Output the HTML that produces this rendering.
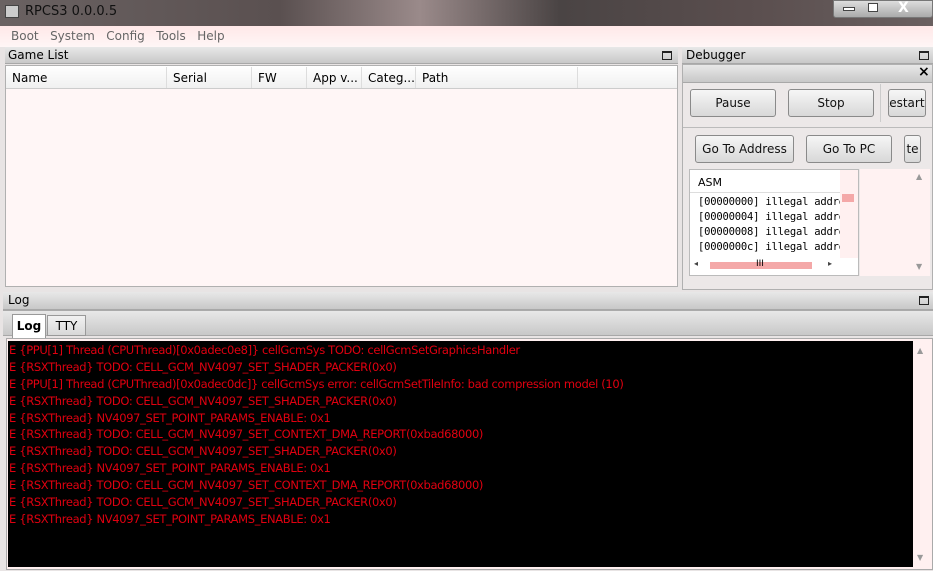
<html><head><style>
*{margin:0;padding:0;box-sizing:border-box}
body{width:933px;height:571px;overflow:hidden;background:#e8e4e4;font-family:"DejaVu Sans","Liberation Sans",sans-serif;font-size:12px;position:relative}
.a{position:absolute}
.tb{background:linear-gradient(#e8e8e8,#c8c8c8);border-bottom:1px solid #a8a8a8}
.btn{position:absolute;border:1px solid #8a8a8a;border-radius:3px;background:linear-gradient(#f6f6f6,#d8d8d8);text-align:center;font-size:12px;line-height:24px;color:#111}
.log div{color:#e00010;font-size:11.5px;height:16.9px;line-height:17px;white-space:nowrap;font-family:"DejaVu Sans",sans-serif;letter-spacing:-0.35px}
.fl{width:10px;height:9px;border:1px solid #222;border-top-width:2px}
</style></head><body>
<div class="a" style="left:0;top:0;width:933px;height:26px;background:linear-gradient(90deg,#6a6262,#5a5050 30%,#9a8a8a 45%,#4a4444 60%,#5a4e4e 80%,#6a6060)"></div>
<div class="a" style="left:5px;top:5px;width:14px;height:13px;background:#ccc;border:1px solid #444"></div>
<div class="a" style="left:25px;top:4px;color:#111;font-size:13px">RPCS3 0.0.0.5</div>
<div class="a" style="left:833px;top:0;width:100px;height:18px;background:linear-gradient(#ddd,#aaa);border:1px solid #777;border-radius:0 0 3px 3px"></div>
<div class="a" style="left:843px;top:7px;width:12px;height:4px;border:1px solid #444;background:#fff"></div>
<div class="a" style="left:868px;top:3px;width:10px;height:9px;border:1px solid #444;background:#fff"></div>
<div class="a" style="left:898px;top:0;color:#fff;font-weight:bold;font-size:14px">X</div>
<div class="a" style="left:0;top:26px;width:933px;height:21px;background:linear-gradient(#ffe8e8,#fff6f6)"></div>
<div class="a" style="left:11px;top:29px;color:#666;font-size:12px">Boot&nbsp;&nbsp;&nbsp;System&nbsp;&nbsp;&nbsp;Config&nbsp;&nbsp;&nbsp;Tools&nbsp;&nbsp;&nbsp;Help</div>
<div class="a tb" style="left:5px;top:47px;width:673px;height:17px"></div>
<div class="a" style="left:8px;top:48px;font-size:12px">Game List</div>
<div class="a fl" style="left:662px;top:51px"></div>
<div class="a" style="left:5px;top:65px;width:673px;height:222px;background:#fff6f6;border:1px solid #b0b0b0"></div>
<div class="a" style="left:6px;top:66px;width:671px;height:23px;background:linear-gradient(#fff,#f0f0f0);border-bottom:1px solid #ccc"></div>
<div class="a" style="left:12px;top:71px">Name</div>
<div class="a" style="left:166px;top:67px;width:1px;height:21px;background:#ddd"></div>
<div class="a" style="left:173px;top:71px">Serial</div>
<div class="a" style="left:251px;top:67px;width:1px;height:21px;background:#ddd"></div>
<div class="a" style="left:258px;top:71px">FW</div>
<div class="a" style="left:306px;top:67px;width:1px;height:21px;background:#ddd"></div>
<div class="a" style="left:313px;top:71px">App v...</div>
<div class="a" style="left:361px;top:67px;width:1px;height:21px;background:#ddd"></div>
<div class="a" style="left:368px;top:71px">Categ...</div>
<div class="a" style="left:415px;top:67px;width:1px;height:21px;background:#ddd"></div>
<div class="a" style="left:422px;top:71px">Path</div>
<div class="a" style="left:577px;top:67px;width:1px;height:21px;background:#ddd"></div>
<div class="a tb" style="left:682px;top:47px;width:251px;height:17px"></div>
<div class="a" style="left:686px;top:48px">Debugger</div>
<div class="a fl" style="left:919px;top:51px"></div>
<div class="a" style="left:682px;top:64px;width:251px;height:226px;background:#ece8e8;border:1px solid #b0b0b0"></div>
<div class="a tb" style="left:683px;top:65px;width:249px;height:18px"></div>
<div class="a" style="left:918px;top:64px;font-weight:bold;font-size:14px">×</div>
<div class="btn" style="left:690px;top:89px;width:86px;height:28px;line-height:26px">Pause</div>
<div class="btn" style="left:788px;top:89px;width:86px;height:28px;line-height:26px">Stop</div>
<div class="a" style="left:880px;top:84px;width:1px;height:38px;background:#ccc"></div>
<div class="btn" style="left:888px;top:89px;width:38px;height:28px;line-height:26px;overflow:hidden;text-indent:-8px;white-space:nowrap">Restart</div>
<div class="a" style="left:683px;top:127px;width:249px;height:1px;background:#bbb"></div>
<div class="btn" style="left:695px;top:135px;width:99px;height:28px;line-height:26px">Go To Address</div>
<div class="btn" style="left:806px;top:135px;width:86px;height:28px;line-height:26px">Go To PC</div>
<div class="btn" style="left:904px;top:135px;width:17px;height:28px;line-height:26px;overflow:hidden">te</div>
<div class="a" style="left:689px;top:169px;width:170px;height:107px;background:#fff;border:1px solid #bbb"></div>
<div class="a" style="left:860px;top:169px;width:70px;height:107px;background:#fff2f2"></div>
<div class="a" style="left:916px;top:172px;font-size:8px;color:#999">▲</div>
<div class="a" style="left:916px;top:262px;font-size:8px;color:#999">▼</div>
<div class="a" style="left:698px;top:176px;font-size:11px">ASM</div>
<div class="a" style="left:690px;top:192px;width:150px;height:1px;background:#ddd"></div>
<div class="a" style="left:840px;top:170px;width:18px;height:88px;background:#fff0f0"></div>
<div class="a" style="left:842px;top:194px;width:12px;height:8px;background:#f4a8a8"></div>
<div class="a" style="left:698px;top:195px;font-family:'DejaVu Sans Mono',monospace;font-size:10.5px;letter-spacing:-0.2px;line-height:15px;width:142px;overflow:hidden;white-space:nowrap">[00000000] illegal addre<br>[00000004] illegal addre<br>[00000008] illegal addre<br>[0000000c] illegal addre</div>
<div class="a" style="left:710px;top:262px;width:102px;height:7px;background:#f4a8a8"></div>
<div class="a" style="left:756px;top:259px;font-size:9px">III</div>
<div class="a" style="left:694px;top:259px;font-size:8px;color:#444">◂</div>
<div class="a" style="left:828px;top:259px;font-size:8px;color:#444">▸</div>
<div class="a tb" style="left:3px;top:292px;width:930px;height:18px"></div>
<div class="a" style="left:8px;top:293px">Log</div>
<div class="a fl" style="left:919px;top:296px"></div>
<div class="a tb" style="left:3px;top:310px;width:930px;height:26px;border-top:1px solid #aaa"></div>
<div class="a" style="left:12px;top:314px;width:34px;height:24px;background:#fff;border:1px solid #999;border-bottom:none;font-weight:bold;text-align:center;line-height:22px">Log</div>
<div class="a" style="left:47px;top:315px;width:39px;height:21px;background:linear-gradient(#f2f2f2,#d8d8d8);border:1px solid #999;text-align:center;line-height:20px">TTY</div>
<div class="a" style="left:6px;top:338px;width:927px;height:232px;background:#fff0f0;border:1px solid #aaa"></div>
<div class="a" style="left:8px;top:341px;width:905px;height:226px;background:#000"></div>
<div class="a" style="left:917px;top:346px;font-size:8px;color:#999">▲</div>
<div class="a" style="left:917px;top:553px;font-size:8px;color:#999">▼</div>
<div class="a log" style="left:9px;top:342px">
<div>E {PPU[1] Thread (CPUThread)[0x0adec0e8]} cellGcmSys TODO: cellGcmSetGraphicsHandler</div>
<div>E {RSXThread} TODO: CELL_GCM_NV4097_SET_SHADER_PACKER(0x0)</div>
<div>E {PPU[1] Thread (CPUThread)[0x0adec0dc]} cellGcmSys error: cellGcmSetTileInfo: bad compression model (10)</div>
<div>E {RSXThread} TODO: CELL_GCM_NV4097_SET_SHADER_PACKER(0x0)</div>
<div>E {RSXThread} NV4097_SET_POINT_PARAMS_ENABLE: 0x1</div>
<div>E {RSXThread} TODO: CELL_GCM_NV4097_SET_CONTEXT_DMA_REPORT(0xbad68000)</div>
<div>E {RSXThread} TODO: CELL_GCM_NV4097_SET_SHADER_PACKER(0x0)</div>
<div>E {RSXThread} NV4097_SET_POINT_PARAMS_ENABLE: 0x1</div>
<div>E {RSXThread} TODO: CELL_GCM_NV4097_SET_CONTEXT_DMA_REPORT(0xbad68000)</div>
<div>E {RSXThread} TODO: CELL_GCM_NV4097_SET_SHADER_PACKER(0x0)</div>
<div>E {RSXThread} NV4097_SET_POINT_PARAMS_ENABLE: 0x1</div>
</div>
</body></html>
